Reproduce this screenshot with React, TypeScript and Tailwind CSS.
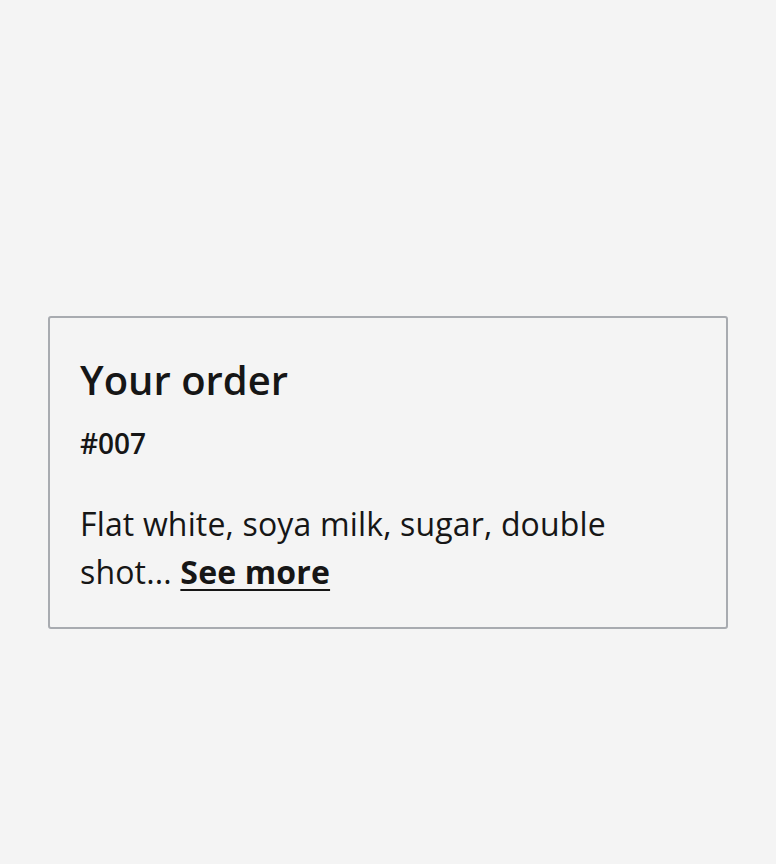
export default function App() {
  return (
    <div className="min-h-screen bg-[#f4f4f4] px-12 pt-[316px] font-['Open_Sans',sans-serif] text-[#161616]">
      {/* Order card */}
      <div className="rounded-[3px] border-2 border-[#a8abb0] pl-[30px] pr-[30px] pt-[37px] pb-[31px]">
        <h2 className="text-[40px] font-semibold leading-[50px]">Your order</h2>
        <p className="mt-5 text-[28px] font-semibold leading-9">#007</p>
        <p className="mt-[39px] text-[32px] leading-[48px] tracking-[0.16px]">
          Flat white, soya milk, sugar, double shot...{" "}
          <a href="#" className="font-bold underline underline-offset-[5px] decoration-2">
            See more
          </a>
        </p>
      </div>
    </div>
  );
}
